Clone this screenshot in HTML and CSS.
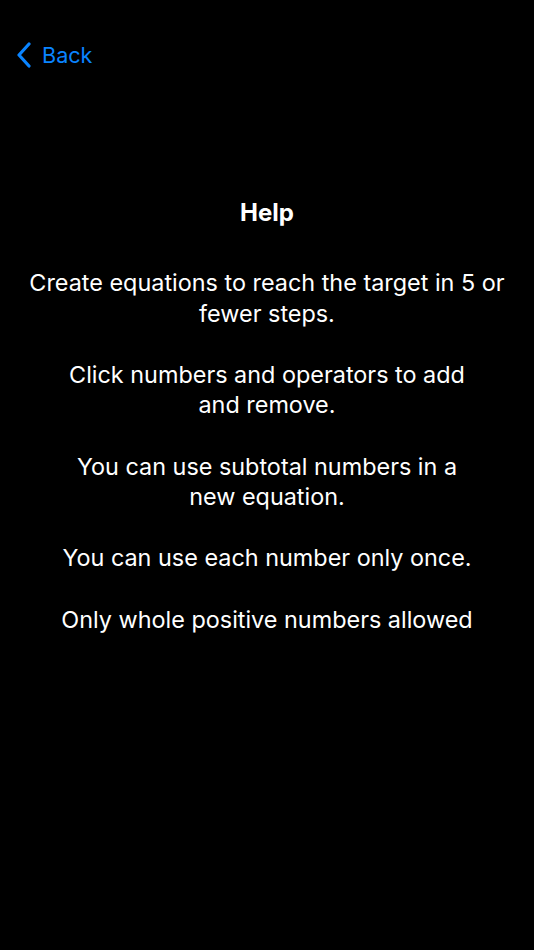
FILE: index.html
```html
<!DOCTYPE html>
<html>
<head>
<meta charset="utf-8">
<link rel="stylesheet" href="styles.css">
</head>
<body>
<div class="screen">
  <nav class="nav">
    <a class="back">
      <svg class="chev" width="16" height="26" viewBox="0 0 16 26"><path d="M13 2 L3 13 L13 24" fill="none" stroke="#0a84ff" stroke-width="3.2" stroke-linecap="round" stroke-linejoin="round"/></svg>
      <span class="back-label">Back</span>
    </a>
  </nav>
  <main class="content">
    <h1 class="title">Help</h1>
    <p class="text">Create equations to reach the target in 5 or<br>fewer steps.<br><br>Click numbers and operators to add<br>and remove.<br><br>You can use subtotal numbers in a<br>new equation.<br><br>You can use each number only once.<br><br>Only whole positive numbers allowed</p>
  </main>
</div>
</body>
</html>
```
FILE: styles.css
```css
html, body {
  margin: 0;
  padding: 0;
  background: #000;
}
.screen {
  width: 534px;
  height: 950px;
  background: #000;
  color: #fff;
  font-family: Inter, "Noto Sans", sans-serif;
}
.nav {
  height: 110px;
  padding-top: 41px;
  padding-left: 16px;
  box-sizing: border-box;
}
.back {
  display: flex;
  align-items: center;
  gap: 10px;
  color: #0a84ff;
}
.chev {
  display: block;
}
.back-label {
  font-size: 21.6px;
  line-height: 28px;
}
.content {
  display: flex;
  flex-direction: column;
  align-items: center;
  padding-top: 88px;
}
.title {
  margin: 0;
  font-size: 24px;
  font-weight: 700;
  line-height: 30px;
}
.text {
  margin: 40px 0 0;
  text-align: center;
  font-size: 23.4px;
  line-height: 30.6px;
}
```
